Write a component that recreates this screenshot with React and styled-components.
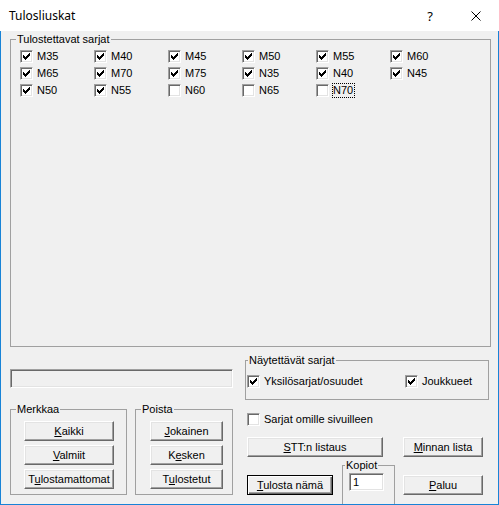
import React from 'react';
import styled, { createGlobalStyle, css } from 'styled-components';

const GlobalStyle = createGlobalStyle`
    html, body {
        margin: 0;
        padding: 0;
        background: #fff;
    }
    body {
        font-family: "Liberation Sans", Arial, sans-serif;
        font-size: 11px;
        color: #000;
    }
`;

const Window = styled.div`
    width: 499px;
    height: 505px;
    display: flex;
    flex-direction: column;
    background: #fff;
`;

const TitleBar = styled.div`
    height: 31px;
    display: flex;
    align-items: center;
    padding-left: 9px;
    font-family: "Noto Sans", "Open Sans", sans-serif;
    font-size: 12px;
    font-weight: 400;
`;

const Title = styled.div`
    flex: 1;
    margin-top: -1px;
`;

const CaptionButton = styled.div`
    width: 46px;
    height: 31px;
    display: flex;
    align-items: center;
    justify-content: center;
    font-size: 13px;
`;

const Body = styled.div`
    flex: 1;
    overflow: hidden;
    background: #f0f0f0;
    border: 1px solid #1883d7;
    border-top: none;
    padding: 2px 8px 0 9px;
`;

const Group = styled.fieldset`
    box-sizing: border-box;
    margin: 0;
    padding: 0;
    min-width: 0;
    border: 1px solid #a0a0a0;
    width: ${p => p.$w}px;
    height: ${p => p.$h}px;
    flex-shrink: 0;
`;

const Legend = styled.legend`
    font-size: 11px;
    line-height: 13px;
    padding: 0 1px;
    margin-left: ${p => p.$inset}px;
`;

const SeriesGrid = styled.div`
    display: grid;
    grid-template-columns: repeat(6, 74px);
    row-gap: 2px;
    padding: 3px 0 0 9px;
`;

const CheckItem = styled.div`
    display: flex;
    align-items: center;
`;

const Box = styled.span`
    box-sizing: border-box;
    width: 13px;
    height: 13px;
    background: #fff;
    border: 1px solid;
    border-color: #a0a0a0 #fff #fff #a0a0a0;
    box-shadow: inset 1px 1px 0 #696969, inset -1px -1px 0 #e3e3e3;
    position: relative;

    svg {
        position: absolute;
        left: 0;
        top: 0;
    }
`;

const CheckLabel = styled.span`
    margin-left: 3px;
    padding: 0 1px 0 0;
    line-height: 13px;
    border: 1px dotted ${p => (p.$focus ? '#000' : 'transparent')};
    white-space: nowrap;
`;

const Check = ({ checked, label, focus }) => (
    <CheckItem>
        <Box>
            {checked && (
                <svg width="11" height="11" viewBox="0 0 11 11" shapeRendering="crispEdges">
                    <rect x="2" y="4" width="1" height="3" fill="#000" />
                    <rect x="3" y="5" width="1" height="3" fill="#000" />
                    <rect x="4" y="6" width="1" height="3" fill="#000" />
                    <rect x="5" y="5" width="1" height="3" fill="#000" />
                    <rect x="6" y="4" width="1" height="3" fill="#000" />
                    <rect x="7" y="3" width="1" height="3" fill="#000" />
                    <rect x="8" y="2" width="1" height="3" fill="#000" />
                </svg>
            )}
        </Box>
        <CheckLabel $focus={focus}>{label}</CheckLabel>
    </CheckItem>
);

const Lower = styled.div`
    display: grid;
    grid-template-columns: 223px 245px;
    column-gap: 12px;
`;

const Column = styled.div`
    display: flex;
    flex-direction: column;
`;

const Field = styled.div`
    box-sizing: border-box;
    width: 223px;
    height: 19px;
    margin-top: 22px;
    border: 1px solid;
    border-color: #a0a0a0 #fff #fff #a0a0a0;
    box-shadow: inset 1px 1px 0 #696969, inset -1px -1px 0 #e3e3e3;
`;

const GroupRow = styled.div`
    display: flex;
    gap: 8px;
    margin-top: 15px;
`;

const ButtonStack = styled.div`
    display: flex;
    flex-direction: column;
    gap: 4px;
    padding: 5px 0 0 ${p => p.$left}px;
`;

const Btn = styled.button`
    box-sizing: border-box;
    width: ${p => p.$w}px;
    height: 20px;
    margin: 0;
    padding: 0;
    font: 11px "Liberation Sans", Arial, sans-serif;
    color: #000;
    background: #f0f0f0;
    border: 1px solid;
    border-color: #fff #696969 #696969 #fff;
    box-shadow: inset -1px -1px 0 #a0a0a0, inset 1px 1px 0 #e3e3e3;
    flex-shrink: 0;

    u {
        text-underline-offset: 1px;
    }

    ${p => p.$default && css`
        border-color: #000;
        box-shadow: inset 1px 1px 0 #fff, inset -1px -1px 0 #696969, inset -2px -2px 0 #a0a0a0;
    `}
`;

const ShowGrid = styled.div`
    display: grid;
    grid-template-columns: 158px auto;
    padding: 7px 0 0 1px;
`;

const Row = styled.div`
    display: flex;
    align-items: flex-start;
    padding-left: 2px;
    margin-top: ${p => p.$top}px;
    gap: ${p => p.$gap || 0}px;
`;

const BottomBtn = styled(Btn)`
    margin-top: 16px;
`;

const CopiesInput = styled.input`
    box-sizing: border-box;
    width: 35px;
    height: 18px;
    margin: 1px 0 0 6px;
    padding: 0 0 0 3px;
    font: 11px "Liberation Sans", Arial, sans-serif;
    color: #000;
    background: #fff;
    border: 1px solid;
    border-color: #a0a0a0 #fff #fff #a0a0a0;
    box-shadow: inset 1px 1px 0 #696969, inset -1px -1px 0 #e3e3e3;
    outline: none;
`;

const series = [
    ['M35', true], ['M40', true], ['M45', true], ['M50', true], ['M55', true], ['M60', true],
    ['M65', true], ['M70', true], ['M75', true], ['N35', true], ['N40', true], ['N45', true],
    ['N50', true], ['N55', true], ['N60', false], ['N65', false], ['N70', false],
];

const App = () => {
    return (
        <>
            <GlobalStyle />
            <Window>
                <TitleBar>
                    <Title>Tulosliuskat</Title>
                    <CaptionButton>?</CaptionButton>
                    <CaptionButton>
                        <svg width="10" height="10" viewBox="0 0 10 10">
                            <path d="M0.5 0.5 L9.5 9.5 M9.5 0.5 L0.5 9.5" stroke="#000" strokeWidth="1" />
                        </svg>
                    </CaptionButton>
                </TitleBar>
                <Body>
                    <Group $w={481} $h={314}>
                        <Legend $inset={5}>Tulostettavat sarjat</Legend>
                        <SeriesGrid>
                            {series.map(([name, on]) => (
                                <Check key={name} label={name} checked={on} focus={name === 'N70'} />
                            ))}
                        </SeriesGrid>
                    </Group>

                    <Lower>
                        <Column>
                            <Field />
                            <GroupRow>
                                <Group $w={117} $h={92}>
                                    <Legend $inset={5}>Merkkaa</Legend>
                                    <ButtonStack $left={13}>
                                        <Btn $w={90}><u>K</u>aikki</Btn>
                                        <Btn $w={90}><u>V</u>almiit</Btn>
                                        <Btn $w={90}>T<u>u</u>lostamattomat</Btn>
                                    </ButtonStack>
                                </Group>
                                <Group $w={98} $h={92}>
                                    <Legend $inset={5}>Poista</Legend>
                                    <ButtonStack $left={14}>
                                        <Btn $w={73}><u>J</u>okainen</Btn>
                                        <Btn $w={73}>K<u>e</u>sken</Btn>
                                        <Btn $w={73}>T<u>u</u>lostetut</Btn>
                                    </ButtonStack>
                                </Group>
                            </GroupRow>
                        </Column>

                        <Column>
                            <Group $w={244} $h={46} style={{ marginTop: 7 }}>
                                <Legend $inset={2}>Näytettävät sarjat</Legend>
                                <ShowGrid>
                                    <Check label="Yksilösarjat/osuudet" checked />
                                    <Check label="Joukkueet" checked />
                                </ShowGrid>
                            </Group>
                            <Row $top={12}>
                                <Check label="Sarjat omille sivuilleen" />
                            </Row>
                            <Row $top={10} $gap={20}>
                                <Btn $w={136}><u>S</u>TT:n listaus</Btn>
                                <Btn $w={80}><u>M</u>innan lista</Btn>
                            </Row>
                            <Row $top={2}>
                                <BottomBtn $w={86} $default><u>T</u>ulosta nämä</BottomBtn>
                                <Group $w={53} $h={70} style={{ marginLeft: 9 }}>
                                    <Legend $inset={2}>Kopiot</Legend>
                                    <CopiesInput value="1" readOnly />
                                </Group>
                                <BottomBtn $w={80} style={{ marginLeft: 8 }}><u>P</u>aluu</BottomBtn>
                            </Row>
                        </Column>
                    </Lower>
                </Body>
            </Window>
        </>
    );
};

export default App;
